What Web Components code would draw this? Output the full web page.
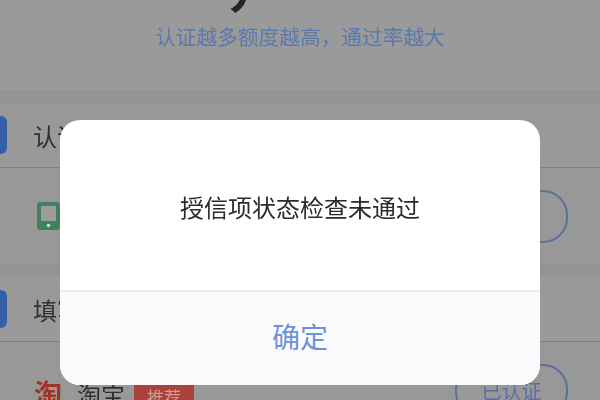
<!DOCTYPE html>
<html lang="zh"><head><meta charset="utf-8">
<style>
html,body{margin:0;padding:0;width:600px;height:400px;overflow:hidden;background:#999;font-family:"Noto Sans CJK SC","Liberation Sans",sans-serif}
</style></head><body>
<credit-page></credit-page>
<script>
const FONT='"Noto Sans CJK SC","Liberation Sans",sans-serif';
class CreditHeader extends HTMLElement{constructor(){super();this.attachShadow({mode:'open'}).innerHTML=`<style>
:host{display:flex;flex-direction:column;align-items:center;height:90px;background:#9a9a9a;overflow:hidden;font-family:${FONT}}
.big{align-self:flex-start;margin-left:222px;height:13px;overflow:hidden;display:flex;align-items:flex-end;font-size:42px;font-weight:700;line-height:42px;color:#23232b;filter:blur(.4px)}
.sub{margin-top:5px;font-size:20.7px;line-height:36px;color:#5a79ae;white-space:nowrap;filter:blur(.5px)}
</style><div class="big"><slot name="title"></slot></div><div class="sub"><slot name="sub"></slot></div>`}}
class CreditSection extends HTMLElement{constructor(){super();this.attachShadow({mode:'open'}).innerHTML=`<style>
:host{display:block;font-family:${FONT}}
.gap{height:13px;background:#949494}
.head{display:flex;align-items:center;box-sizing:border-box;height:65px;border-bottom:1px solid #7f7f7f;background:#999}
.bar{width:7px;height:38px;background:#3460a9;border-radius:0 6px 6px 0;flex:none}
.t{margin-left:26px;font-size:24px;color:#2e2e33;white-space:nowrap;filter:blur(.4px)}
</style><div class="gap"></div><div class="head"><span class="bar"></span><span class="t"><slot name="title"></slot></span></div><slot></slot>`}}
class CreditRow extends HTMLElement{constructor(){super();this.attachShadow({mode:'open'}).innerHTML=`<style>
:host{display:flex;align-items:center;height:96px;padding:0 32px 0 35px;font-family:${FONT};background:#989898}
.name{margin:6px 0 0 15px;font-size:24px;color:#2e2e33;white-space:nowrap;filter:blur(.4px)}
.sp{flex:1}
</style><slot name="icon"></slot><span class="name"><slot name="name"></slot></span><slot name="tag"></slot><span class="sp"></span><slot name="btn"></slot>`}}
class CreditTag extends HTMLElement{constructor(){super();this.attachShadow({mode:'open'}).innerHTML=`<style>
:host{display:inline-flex;align-items:center;justify-content:center;margin:12px 0 0 9px;width:60px;height:26px;background:#a8423a;border-radius:2px;color:#cf9c96;font-size:17px;font-family:${FONT};filter:blur(.5px)}
</style><slot></slot>`}}
class CreditBtn extends HTMLElement{constructor(){super();this.attachShadow({mode:'open'}).innerHTML=`<style>
:host{display:inline-flex;align-items:center;justify-content:center;box-sizing:border-box;width:113px;height:53px;border:2px solid #5d7099;border-radius:25px;color:#5a6ea8;font-size:20px;font-family:${FONT};white-space:nowrap;filter:blur(.3px)}
</style><slot></slot>`}}
class AlertDialog extends HTMLElement{constructor(){super();this.attachShadow({mode:'open'}).innerHTML=`<style>
:host{position:absolute;left:60px;top:120px;width:480px;height:265px;background:#fff;border-radius:20px;overflow:hidden;display:flex;flex-direction:column;font-family:${FONT}}
.msg{height:172px;flex:none;box-sizing:border-box;display:flex;align-items:center;justify-content:center;font-size:24px;color:#2c2c2c;padding-top:3px;border-bottom:2px solid #ececec;white-space:nowrap;filter:blur(.3px)}
.act{flex:1;display:flex;align-items:center;justify-content:center;background:#fbfbfd;color:#6d93d8;font-size:28px;padding-bottom:5px}
</style><div class="msg"><slot name="msg"></slot></div><div class="act"><slot name="act"></slot></div>`}}
class CreditPage extends HTMLElement{constructor(){super();this.attachShadow({mode:'open'}).innerHTML=`<style>
:host{display:block;position:relative;width:600px;height:400px;overflow:hidden;background:#999}
svg{display:block}
.logo{color:#9e3326;font-size:28px;font-weight:700;margin-top:6px;margin-left:-1px;line-height:1;filter:blur(.4px)}
</style>
<credit-header><span slot="title">丿</span><span slot="sub">认证越多额度越高\uFF0C通过率越大</span></credit-header>
<credit-section><span slot="title">认证</span>
<credit-row><svg slot="icon" style="margin-left:2px" width="23" height="28" viewBox="0 0 23 28"><rect width="23" height="28" rx="3" fill="#41805f"/><rect x="4" y="4" width="15" height="15" fill="#9c9c9c"/><circle cx="11.5" cy="23.5" r="1.8" fill="#cfdcd4"/></svg><credit-btn slot="btn"></credit-btn></credit-row>
</credit-section>
<credit-section><span slot="title">填写</span>
<credit-row><span slot="icon" class="logo">淘</span><span slot="name">淘宝</span><credit-tag slot="tag">推荐</credit-tag><credit-btn slot="btn">已认证</credit-btn></credit-row>
</credit-section>
<alert-dialog><span slot="msg">授信项状态检查未通过</span><span slot="act">确定</span></alert-dialog>`}}
[['credit-header',CreditHeader],['credit-section',CreditSection],['credit-row',CreditRow],['credit-tag',CreditTag],['credit-btn',CreditBtn],['alert-dialog',AlertDialog],['credit-page',CreditPage]].forEach(([n,c])=>customElements.define(n,c));
</script></body></html>
